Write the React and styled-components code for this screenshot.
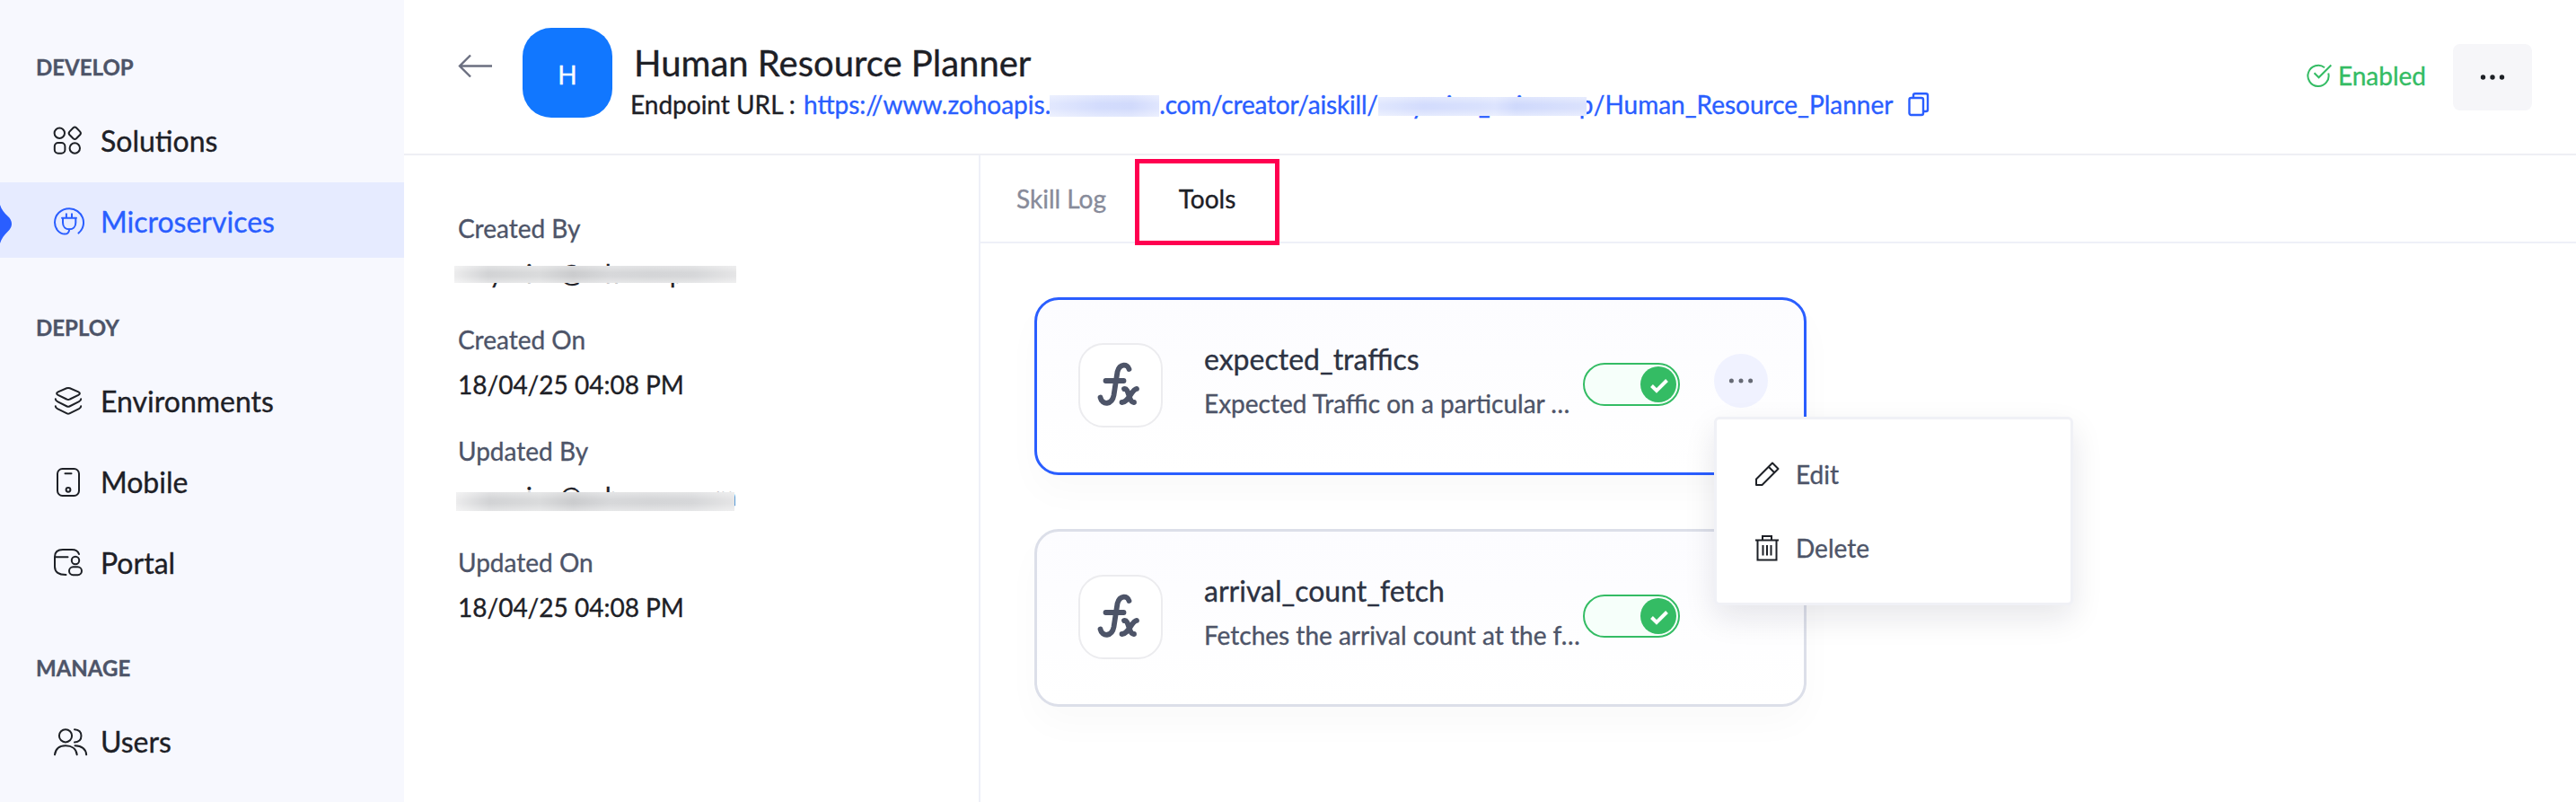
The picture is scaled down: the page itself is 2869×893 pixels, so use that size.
import React from "react";
import styled, { createGlobalStyle } from "styled-components";

const GlobalStyle = createGlobalStyle`
  * { box-sizing: border-box; }
  body {
    margin: 0;
    background: #fff;
    color: #1d2026;
    font-family: Lato, "Open Sans", sans-serif;
    font-size: 28px;
    -webkit-text-stroke: 0.35px currentColor;
    overflow: hidden;
  }
`;

const Page = styled.div`
  display: flex;
  height: 893px;
  background: #fff;
`;

const Sidebar = styled.nav`
  width: 450px;
  flex: none;
  padding-top: 60px;
  background: #f7f8fe;
`;

const NavGroup = styled.section`
  display: flex;
  flex-direction: column;
  gap: 6px;
  margin-bottom: ${(p) => p.$space}px;
`;

const NavHeading = styled.h2`
  margin: 0 0 17px;
  padding-left: 40px;
  font-size: 24px;
  line-height: 30px;
  font-weight: 700;
  color: #4d5468;
`;

const NavItem = styled.a`
  position: relative;
  display: flex;
  align-items: center;
  height: 84px;
  padding-left: 58px;
  gap: 14px;
  font-size: 32px;
  font-weight: 400;
  color: ${(p) => (p.$active ? "#2a5eff" : "#1d2026")};
  background: ${(p) => (p.$active ? "#e6ebff" : "transparent")};
`;

const NavLabel = styled.span`
  padding-top: 3px;
  line-height: 40px;
`;

const ActiveMarker = styled.svg`
  position: absolute;
  left: 0;
  top: 25px;
`;

const Main = styled.main`
  flex: 1;
  min-width: 0;
  display: flex;
  flex-direction: column;
`;

const Header = styled.header`
  display: flex;
  align-items: flex-start;
  height: 173px;
  padding: 0 49px 0 60px;
  border-bottom: 2px solid #eeeff4;
`;

const BackIcon = styled.svg`
  margin: 60px 34px 0 0;
`;

const Avatar = styled.div`
  display: flex;
  align-items: center;
  justify-content: center;
  width: 100px;
  height: 100px;
  margin-top: 31px;
  padding-top: 4px;
  border-radius: 32px;
  background: #1177ff;
  color: #fff;
  font-size: 28px;
`;

const Heading = styled.div`
  flex: 1;
  padding: 45px 0 0 20px;
`;

const Title = styled.h1`
  margin: 0 0 4px;
  padding-left: 4px;
  font-size: 40px;
  line-height: 50px;
  font-weight: 400;
`;

const Endpoint = styled.div`
  display: flex;
  align-items: center;
  height: 34px;
  line-height: 34px;
  white-space: pre;
`;

const EndpointLabel = styled.span`
  width: 193px;
`;

const Url = styled.span`
  display: flex;
  color: #2a5eff;
`;

const UrlPath = styled.span`
  letter-spacing: -0.19px;
`;

const Redacted = styled.span`
  position: relative;
  display: block;
  width: ${(p) => p.$w}px;
  height: 34px;
  &::after {
    content: "";
    position: absolute;
    left: ${(p) => p.$left || 0}px;
    top: ${(p) => p.$top}px;
    width: ${(p) => p.$cover}px;
    height: ${(p) => p.$h}px;
    background: ${(p) => p.$fill};
  }
`;

/* Letter that peeks out from under a redaction strip. */
const Peek = styled.span`
  position: absolute;
  top: 0;
  left: ${(p) => p.$x}px;
`;

const CopyIcon = styled.svg`
  margin-left: 17px;
`;

const Status = styled.div`
  display: flex;
  align-items: center;
  gap: 7px;
  margin: 67px 30px 0 0;
  line-height: 34px;
  color: #34bc64;
`;

const MoreButton = styled.button`
  display: flex;
  align-items: center;
  justify-content: center;
  width: 88px;
  height: 74px;
  margin-top: 49px;
  padding: 0;
  border: 0;
  border-radius: 8px;
  background: #f6f6f9;
`;

const Body = styled.div`
  flex: 1;
  display: flex;
`;

const Details = styled.dl`
  width: 642px;
  flex: none;
  margin: 0;
  padding: 64px 0 0 60px;
  border-right: 2px solid #eef0f8;
`;

const Term = styled.dt`
  height: 50px;
  line-height: 34px;
  color: #4d5468;
`;

const Value = styled.dd`
  margin: 0 0 40px;
  height: 34px;
  line-height: 34px;
`;

const Workspace = styled.div`
  flex: 1;
`;

const Tabs = styled.div`
  display: flex;
  height: 98px;
  padding: 4px 0 0 8px;
  border-bottom: 2px solid #eef0f8;
`;

const Tab = styled.div`
  height: ${(p) => (p.$marked ? 96 : 94)}px;
  width: ${(p) => (p.$marked ? 161 : 164)}px;
  display: flex;
  justify-content: center;
  padding-top: ${(p) => (p.$marked ? 22 : 27)}px;
  line-height: 34px;
  border: ${(p) => (p.$marked ? "5px solid #ff0050" : "0")};
  color: ${(p) => (p.$marked ? "#1d2026" : "#878b9a")};
`;

const CardList = styled.div`
  display: flex;
  flex-direction: column;
  gap: 60px;
  padding: 60px 0 0 60px;
`;

const Card = styled.article`
  position: relative;
  display: flex;
  align-items: flex-start;
  width: 860px;
  height: 198px;
  padding: 48px 0 0 46px;
  border: 3px solid ${(p) => (p.$selected ? "#2a5eff" : "#dcdfe9")};
  border-radius: 27px;
  background: linear-gradient(180deg, #fcfcff, #ffffff);
  box-shadow: 0 20px 40px rgba(0, 0, 0, 0.025);
`;

const FxTile = styled.div`
  width: 94px;
  height: 94px;
  flex: none;
  border: 2px solid #ececef;
  border-radius: 28px;
  background: #fff;
`;

const CardText = styled.div`
  width: 422px;
  margin-left: 46px;
  white-space: nowrap;
`;

const ToolName = styled.div`
  margin-top: -2px;
  font-size: 32px;
  line-height: 40px;
  color: #2c3242;
`;

const ToolNote = styled.div`
  margin-top: 12px;
  line-height: 34px;
  color: #4d5468;
`;

const Toggle = styled.div`
  display: flex;
  justify-content: flex-end;
  align-items: center;
  width: 108px;
  height: 48px;
  margin-top: 22px;
  padding-right: 2px;
  border: 2px solid #34bc64;
  border-radius: 24px;
  background: #f6fffa;
`;

const Knob = styled.div`
  display: flex;
  width: 40px;
  height: 40px;
  border-radius: 50%;
  background: #34bc64;
`;

const RoundMore = styled.div`
  display: flex;
  align-items: center;
  justify-content: center;
  width: 60px;
  height: 60px;
  margin: 12px 0 0 38px;
  border-radius: 50%;
  background: #f0f2ff;
`;

const Menu = styled.div`
  position: absolute;
  z-index: 2;
  left: 754px;
  top: 130px;
  width: 400px;
  height: 210px;
  padding: 44px 0 0 41px;
  border: 3px solid #f0f1f6;
  border-radius: 6px;
  background: #fff;
  box-shadow: 0 14px 34px rgba(20, 24, 50, 0.1);
`;

const MenuItem = styled.div`
  display: flex;
  align-items: center;
  gap: 17px;
  height: 34px;
  margin-bottom: 48px;
  line-height: 34px;
  color: #4d5468;
`;

const Dots = ({ gap, r, color }) => (
  <svg width="40" height="8" viewBox="-20 -4 40 8" fill={color}>
    <circle cx={-gap} cy="0" r={r} />
    <circle cx="0" cy="0" r={r} />
    <circle cx={gap} cy="0" r={r} />
  </svg>
);

const navIcons = {
  Solutions: (
    <>
      <circle cx="8.3" cy="13.3" r="5.7" />
      <path d="M23.6 7.3q1.7-1.5 3.4 0l4.2 4.3q1.5 1.7 0 3.4l-4.2 4.3q-1.7 1.5-3.4 0l-4.2-4.3q-1.5-1.7 0-3.4z" />
      <rect x="2.8" y="24" width="11.6" height="11.8" rx="4" />
      <circle cx="25.3" cy="30" r="5.7" />
    </>
  ),
  Microservices: (
    <>
      <path d="M29.5 34.6A16 15.6 0 0 0 19.2 7.2C9.8 7.2 3 14.2 3 22.8C3 30 8.5 35.6 14 35.6C17.5 35.6 19 33.5 19.2 30.5" />
      <path d="M11 17.7H27M12 17.7V23C12 27.5 15 30.3 19.2 30.3S26.3 27.5 26.3 23V17.7M15.9 17V13.2M22 17V13.2" />
    </>
  ),
  Environments: (
    <>
      <path d="M16.2 7.3Q18 6.6 19.8 7.3L29.3 11.3Q32.5 13 29.3 14.9L19.8 19.5Q18 20.5 16.2 19.5L6.7 14.9Q3.5 13 6.7 11.3Z" />
      <path d="M3.8 19.3Q3.7 21 6 22.2L16.6 27.5Q18 28.2 19.4 27.5L30 22.2Q32.3 21 32.2 19.3" />
      <path d="M3.8 27.3Q3.7 29 6 30.2L16.6 35.4Q18 36.1 19.4 35.4L30 30.2Q32.3 29 32.2 27.3" />
    </>
  ),
  Mobile: (
    <>
      <rect x="6" y="7" width="24" height="30" rx="5.5" />
      <path d="M14.5 12.3H21.5" />
      <circle cx="18" cy="30.3" r="2.4" />
    </>
  ),
  Portal: (
    <>
      <path d="M30 12Q28.5 7 22 7H12Q3 7 3 15V26Q3 35 15.5 35M3 15.3H17.5" />
      <circle cx="26" cy="19" r="4.2" />
      <rect x="19" y="26.3" width="14" height="8.9" rx="4.4" />
    </>
  ),
  Users: (
    <>
      <circle cx="15" cy="15.3" r="7.1" />
      <path d="M3 36.3C4 29.5 8.5 26.3 15 26.3S27 29.5 27.7 36.3M25 8.2C30 8.5 32.5 11.5 32.5 15.3S30 22.2 25 22.5M25.5 26.3C33 26.6 37.5 30 38.2 36.3" />
    </>
  ),
};

const NavRow = ({ name, active }) => (
  <NavItem $active={active}>
    {active && (
      <ActiveMarker width="13" height="43" viewBox="0 0 13 43">
        <path d="M0 0C1.5 5 5 9.5 8.5 12.5C14.5 18 14.5 24.5 8.5 30C5 33.5 1.5 37.5 0 43Z" fill="#2a5eff" />
      </ActiveMarker>
    )}
    <svg width="40" height="40" viewBox="0 0 40 40" fill="none" stroke="currentColor" strokeWidth="2" strokeLinecap="round">
      {navIcons[name]}
    </svg>
    <NavLabel>{name}</NavLabel>
  </NavItem>
);

const groups = [
  { title: "DEVELOP", items: ["Solutions", "Microservices"], space: 63 },
  { title: "DEPLOY", items: ["Environments", "Mobile", "Portal"], space: 62 },
  { title: "MANAGE", items: ["Users"], space: 0 },
];

const FxIcon = () => (
  <svg width="90" height="90" viewBox="0 0 90 90" fill="none" stroke="#4d5468" strokeWidth="5.8" strokeLinecap="round">
    <path d="M54.5 27C53 21 44 20.5 41.5 30L37.5 56C35.5 67 24.500 67.500 22.500 58.500M28.500 40H48.500M49 49C54.500 47.500 54 64.500 60 64M63 48.800C57 49.500 54 64.500 46.500 64" />
  </svg>
);

const Tool = ({ name, note, selected, children }) => (
  <Card $selected={selected}>
    <FxTile>
      <FxIcon />
    </FxTile>
    <CardText>
      <ToolName>{name}</ToolName>
      <ToolNote>{note}</ToolNote>
    </CardText>
    <Toggle>
      <Knob>
        <svg width="40" height="40" viewBox="0 0 40 40" fill="none" stroke="#fff" strokeWidth="4">
          <path d="M12.5 21.5L18 27L29.5 15.5" />
        </svg>
      </Knob>
    </Toggle>
    {children}
  </Card>
);

const fade = "linear-gradient(180deg, rgba(255,255,255,.35), rgba(255,255,255,0) 40%, rgba(255,255,255,0) 60%, rgba(255,255,255,.4))";
const blue = `${fade}, linear-gradient(90deg, #e2e8fe, #d3dcfd 45%, #d1dafc 75%, #e0e6fe)`;
const blueLong = `${fade}, linear-gradient(90deg, #e0e7fe, #d3dcfd 22%, #d9e1fd 48%, #dde4fe 56%, #cfd9fc 66%, #dbe2fd)`;
const grey = `${fade}, linear-gradient(90deg, #ececed, #d2d3d5 12%, #dadbdc 30%, #cbccce 42%, #d7d8da 55%, #d4d5d7 70%, #d6d7d9 85%, #e5e5e6)`;

export default function App() {
  return (
    <Page>
      <GlobalStyle />
      <Sidebar>
        {groups.map((g) => (
          <NavGroup key={g.title} $space={g.space}>
            <NavHeading>{g.title}</NavHeading>
            {g.items.map((n) => (
              <NavRow key={n} name={n} active={n === "Microservices"} />
            ))}
          </NavGroup>
        ))}
      </Sidebar>
      <Main>
        <Header>
          <BackIcon width="38" height="28" viewBox="0 0 38 28" fill="none" stroke="#6b6f80" strokeWidth="2.4">
            <path d="M2 13.5H38M14 1.5L2 13.5L14 25.5" />
          </BackIcon>
          <Avatar>H</Avatar>
          <Heading>
            <Title>Human Resource Planner</Title>
            <Endpoint>
              <EndpointLabel>Endpoint URL :</EndpointLabel>
              <Url>
                <span>https://www.zohoapis.</span>
                <Redacted $w={121} $left={-1} $cover={122} $top={7} $h={24} $fill={blue} />
                <UrlPath>.com/creator/aiskill/</UrlPath>
                <Redacted $w={240} $cover={232} $top={9} $h={21} $fill={blueLong}>
                  <Peek $x={37}>y</Peek>
                  <Peek $x={76}>i</Peek>
                  <Peek $x={112}>_</Peek>
                  <Peek $x={154}>i</Peek>
                  <Peek $x={224}>p</Peek>
                </Redacted>
                <span>/Human_Resource_Planner</span>
              </Url>
              <CopyIcon width="24" height="28" viewBox="0 0 24 28" fill="none" stroke="#2a5eff" strokeWidth="2.4">
                <rect x="1.5" y="7" width="15.5" height="19" rx="2" />
                <path d="M6 6.5V4Q6 2.2 8 2.2H20Q22 2.2 22 4V20Q22 22 20 22H17.5" />
              </CopyIcon>
            </Endpoint>
          </Heading>
          <Status>
            <svg width="28" height="28" viewBox="0 0 28 28" fill="none" stroke="currentColor" strokeWidth="2">
              <path d="M20 5.2A11.6 11.6 0 1 0 24.2 11.5" />
              <path d="M8.5 11.3L13.5 16.3L27.3 2.5" />
            </svg>
            Enabled
          </Status>
          <MoreButton>
            <Dots gap={10.5} r={2.7} color="#1d2026" />
          </MoreButton>
        </Header>
        <Body>
          <Details>
            <Term>Created By</Term>
            <Value>
              <Redacted $w={309} $left={-4} $cover={314} $top={9} $h={19} $fill={grey}>
                <Peek $x={35}>y</Peek>
                <Peek $x={76}>i</Peek>
                <Peek $x={114}>@</Peek>
                <Peek $x={164}>h</Peek>
                <Peek $x={236}>p</Peek>
              </Redacted>
            </Value>
            <Term>Created On</Term>
            <Value>18/04/25 04:08 PM</Value>
            <Term>Updated By</Term>
            <Value>
              <Redacted $w={309} $left={-2} $cover={310} $top={13} $h={21} $fill={grey}>
                <Peek $x={76}>i</Peek>
                <Peek $x={114}>@</Peek>
                <Peek $x={164}>h</Peek>
                <Peek $x={287}>m</Peek>
              </Redacted>
            </Value>
            <Term>Updated On</Term>
            <Value>18/04/25 04:08 PM</Value>
          </Details>
          <Workspace>
            <Tabs>
              <Tab>Skill Log</Tab>
              <Tab $marked>Tools</Tab>
            </Tabs>
            <CardList>
              <Tool name="expected_traffics" note="Expected Traffic on a particular …" selected>
                <RoundMore>
                  <Dots gap={10.6} r={2.5} color="#666a75" />
                </RoundMore>
                <Menu>
                  <MenuItem>
                    <svg width="30" height="30" viewBox="0 0 30 30" fill="none" stroke="#1d2026" strokeWidth="2" strokeLinejoin="round">
                      <path d="M3 27V20.5L21 2.5L27.5 9L9.5 27ZM16.5 6.5L23.5 13.5" />
                    </svg>
                    Edit
                  </MenuItem>
                  <MenuItem>
                    <svg width="30" height="30" viewBox="0 0 30 30" fill="none" stroke="#1d2026" strokeWidth="2">
                      <path d="M2 6.5H28M10 6V2H20V6M4.5 7V28.5H25.5V7M10.5 12V23.5M15 12V23.5M19.5 12V23.5" />
                    </svg>
                    Delete
                  </MenuItem>
                </Menu>
              </Tool>
              <Tool name="arrival_count_fetch" note="Fetches the arrival count at the f…" />
            </CardList>
          </Workspace>
        </Body>
      </Main>
    </Page>
  );
}
